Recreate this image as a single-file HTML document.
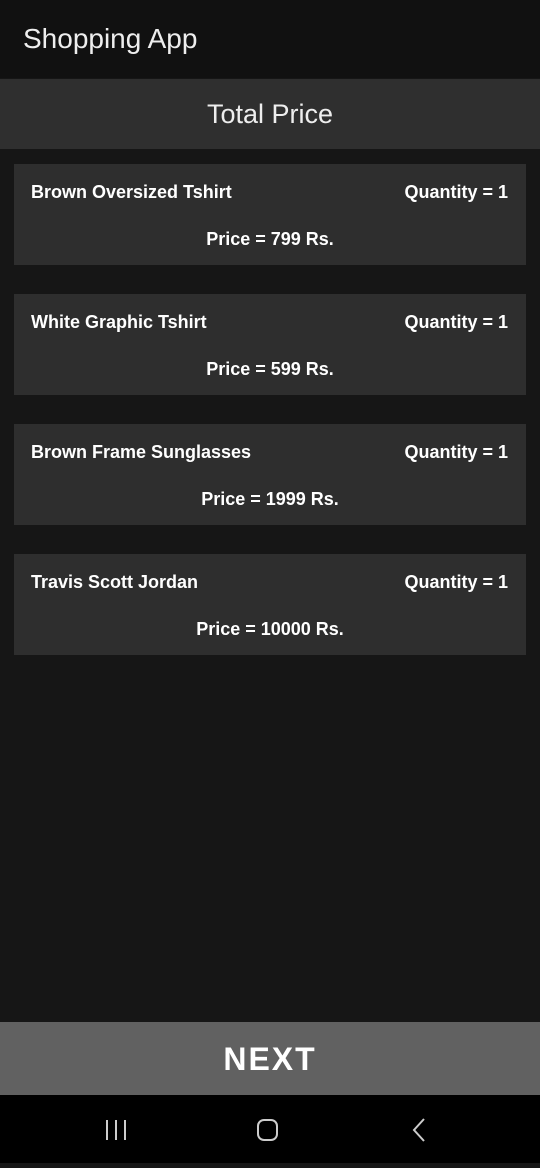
<!DOCTYPE html>
<html><head><meta charset="utf-8"><style>
*{margin:0;padding:0;box-sizing:border-box}
body{width:540px;height:1163px;background:#161616;font-family:"Liberation Sans",sans-serif;color:#fff;position:relative;overflow:hidden}
.bar{position:absolute;left:0;top:0;width:540px;height:78px;background:#111;}
.bar span{position:absolute;left:23px;top:23px;font-size:28px;color:#eee}
.tp{position:absolute;left:0;top:79px;width:540px;height:70px;background:#2f2f2f;text-align:center;font-size:27px;line-height:70px;color:#eee}
.card{position:absolute;left:14px;width:512px;height:101px;background:#2e2e2e;font-weight:bold;font-size:18px}
.card .n{position:absolute;left:17px;top:18px}
.card .q{position:absolute;right:18px;top:18px}
.card .p{position:absolute;left:0;right:0;top:65px;text-align:center}
.next{position:absolute;left:0;top:1022px;width:540px;height:73px;background:#616161;text-align:center;line-height:75px;font-size:32px;font-weight:bold;letter-spacing:2px}
.nav{position:absolute;left:0;top:1095px;width:540px;height:68px;background:#000}
</style></head><body>
<div class="bar"><span>Shopping App</span></div>
<div class="tp">Total Price</div>
<div class="card" style="top:164px"><span class="n">Brown Oversized Tshirt</span><span class="q">Quantity = 1</span><div class="p">Price = 799 Rs.</div></div>
<div class="card" style="top:294px"><span class="n">White Graphic Tshirt</span><span class="q">Quantity = 1</span><div class="p">Price = 599 Rs.</div></div>
<div class="card" style="top:424px"><span class="n">Brown Frame Sunglasses</span><span class="q">Quantity = 1</span><div class="p">Price = 1999 Rs.</div></div>
<div class="card" style="top:554px"><span class="n">Travis Scott Jordan</span><span class="q">Quantity = 1</span><div class="p">Price = 10000 Rs.</div></div>
<div class="next">NEXT</div>
<div class="nav"><svg width="540" height="68" fill="none" stroke="#ccc" stroke-width="2">
<path d="M107 25v20M116 25v20M125 25v20"/>
<rect x="258" y="25" width="19" height="20" rx="6"/>
<path d="M424 24l-10 11 10 11"/>
</svg></div>
</body></html>
